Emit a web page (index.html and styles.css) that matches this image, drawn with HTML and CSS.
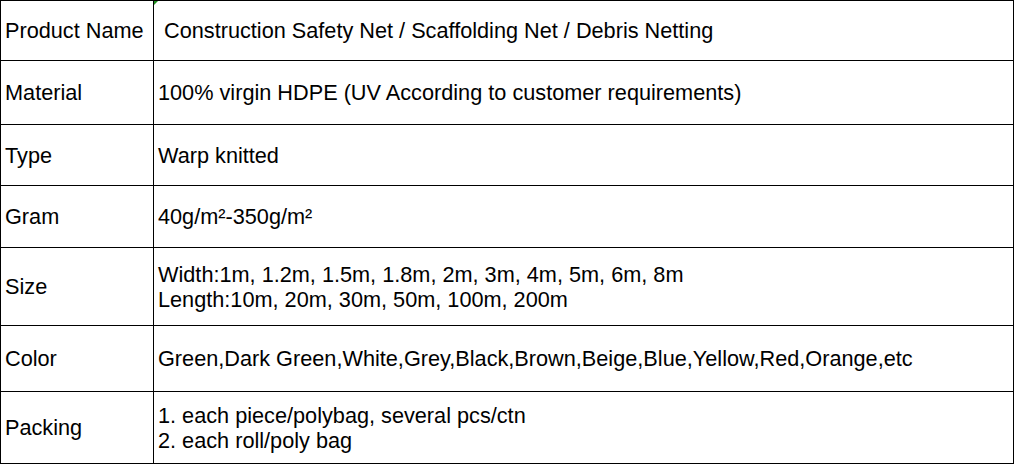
FILE: index.html
```html
<!DOCTYPE html>
<html>
<head>
<meta charset="utf-8">
<link rel="stylesheet" href="styles.css">
</head>
<body>
<div class="sheet">
  <div class="cell label">Product Name</div>
  <div class="cell value first"><span class="marker"></span>&nbsp;Construction Safety Net / Scaffolding Net / Debris Netting</div>
  <div class="cell label">Material</div>
  <div class="cell value">100% virgin HDPE (UV According to customer requirements)</div>
  <div class="cell label">Type</div>
  <div class="cell value">Warp knitted</div>
  <div class="cell label">Gram</div>
  <div class="cell value">40g/m²-350g/m²</div>
  <div class="cell label">Size</div>
  <div class="cell value"><div>Width:1m, 1.2m, 1.5m, 1.8m, 2m, 3m, 4m, 5m, 6m, 8m</div><div>Length:10m, 20m, 30m, 50m, 100m, 200m</div></div>
  <div class="cell label">Color</div>
  <div class="cell value">Green,Dark Green,White,Grey,Black,Brown,Beige,Blue,Yellow,Red,Orange,etc</div>
  <div class="cell label">Packing</div>
  <div class="cell value"><div>1. each piece/polybag, several pcs/ctn</div><div>2. each roll/poly bag</div></div>
</div>
</body>
</html>
```
FILE: styles.css
```css
html, body {
  margin: 0;
  padding: 0;
  background: #fff;
}
.sheet {
  display: grid;
  grid-template-columns: 153px 860px;
  grid-template-rows: 60px 64px 61px 62px 78px 66px 72px;
  border-top: 1px solid #000;
  border-left: 1px solid #000;
  width: 1013px;
  font-family: "Liberation Sans", Arial, sans-serif;
  font-size: 21.7px;
  color: #000;
}
.cell {
  box-sizing: border-box;
  border-right: 1px solid #000;
  border-bottom: 1px solid #000;
  display: flex;
  flex-direction: column;
  justify-content: center;
  padding-left: 4px;
  line-height: 25px;
  white-space: nowrap;
}
.value {
  padding-left: 4px;
}
.first {
  position: relative;
}
.marker {
  position: absolute;
  left: 0;
  top: 0;
  width: 0;
  height: 0;
  border-top: 4px solid #1f8f1f;
  border-right: 4px solid transparent;
}
```
